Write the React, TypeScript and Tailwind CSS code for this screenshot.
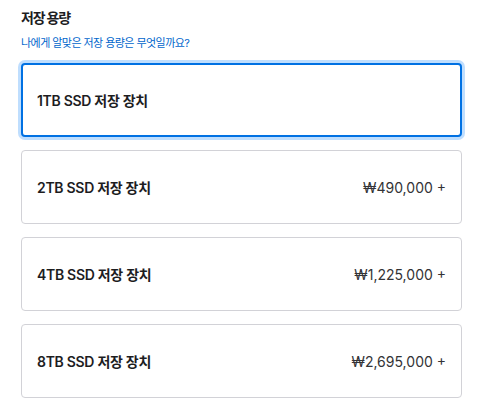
import { useState } from "react"

const options = [
  { id: "1tb", label: "1TB SSD 저장 장치", price: "" },
  { id: "2tb", label: "2TB SSD 저장 장치", price: "₩490,000 +" },
  { id: "4tb", label: "4TB SSD 저장 장치", price: "₩1,225,000 +" },
  { id: "8tb", label: "8TB SSD 저장 장치", price: "₩2,695,000 +" },
]

export default function App() {
  const [selected, setSelected] = useState("1tb")

  return (
    <div
      className="min-h-screen bg-white px-[21px] pt-[8px] text-[#1d1d1f]"
      style={{ fontFamily: 'Inter, "Noto Sans CJK KR", sans-serif' }}
    >
      <h2 className="text-[14px] font-bold leading-[20px] tracking-[-1.2px]">저장 용량</h2>
      <a href="#" className="mt-[7px] block text-[11px] leading-[16px] tracking-[-0.55px] text-[#0066cc]">
        나에게 알맞은 저장 용량은 무엇일까요?
      </a>

      <div className="mt-[12px] flex w-[441px] flex-col gap-[13px]">
        {options.map((opt) => {
          const active = opt.id === selected
          return (
            <button
              key={opt.id}
              type="button"
              onClick={() => setSelected(opt.id)}
              className={
                active
                  ? "flex h-[74px] items-center justify-between rounded-[4px] border-2 border-[#0071e3] bg-white px-[14px] shadow-[0_0_0_3px_rgba(0,125,250,0.25)]"
                  : "flex h-[74px] items-center justify-between rounded-[4px] border border-[#d2d2d7] bg-white px-[15px]"
              }
            >
              <span className="text-[14px] font-semibold tracking-[-0.3px]">{opt.label}</span>
              <span className="text-[14px] text-[#333336]">{opt.price}</span>
            </button>
          )
        })}
      </div>
    </div>
  )
}
